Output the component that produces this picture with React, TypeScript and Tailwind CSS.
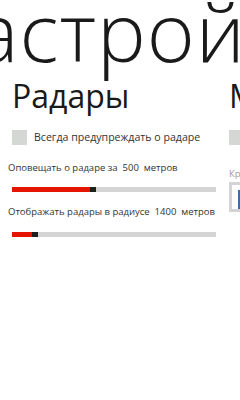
import { useState } from 'react'

const font = { fontFamily: '"Open Sans", "Noto Sans", sans-serif' }

function Slider({ value }: { value: number }) {
  // value is the red part width in px, thumb follows it
  return (
    <div className="flex h-[5px] w-[204px] bg-[#d4d4d4]">
      <div className="h-full bg-[#e51400]" style={{ width: value }} />
      <div className="h-full w-[6px] bg-[#1f1f1f]" />
    </div>
  )
}

export default function App() {
  const [warnAlways, setWarnAlways] = useState(false)

  return (
    <div className="h-[400px] w-[240px] overflow-hidden bg-white text-[#1a1a1a]" style={font}>
      {/* Panorama title */}
      <div className="ml-[-85px] mt-[-11px] h-[91px] whitespace-nowrap text-[82px] font-light leading-none tracking-[1px]">
        Настройки
      </div>

      <div className="flex">
        {/* Radars section */}
        <div className="w-[229px] shrink-0 pl-3">
          <h2 className="h-[32px] text-[32px] font-normal leading-none">Радары</h2>

          <label className="mt-[18px] flex h-[15px] items-center gap-[7px]" onClick={() => setWarnAlways(!warnAlways)}>
            <span className="h-[15px] w-[15px] shrink-0 bg-[#d5d7d4]" />
            <span className="whitespace-nowrap text-[10.6px] leading-[15px] text-[#333]">Всегда предупреждать о радаре</span>
          </label>

          <div className="ml-[-4px] mt-[17px] h-[12px] whitespace-nowrap text-[9.5px] leading-[12px] text-[#333]">
            Оповещать о радаре за&nbsp; 500 &nbsp;метров
          </div>
          <div className="mt-[13px]">
            <Slider value={78} />
          </div>

          <div className="ml-[-4px] mt-[14px] h-[12px] whitespace-nowrap text-[9.5px] leading-[12px] text-[#333]">
            Отображать радары в радиусе&nbsp; 1400 &nbsp;метров
          </div>
          <div className="mt-[14px]">
            <Slider value={20} />
          </div>
        </div>

        {/* Next section, peeking in */}
        <div className="w-[200px] shrink-0">
          <h2 className="h-[32px] whitespace-nowrap text-[32px] font-normal leading-none">Маршрут</h2>
          <div className="mt-[18px] h-[15px] w-[15px] bg-[#d5d7d4]" />
          <div className="mt-[23px] h-[12px] whitespace-nowrap text-[9.5px] leading-[12px] text-[#9a9a9a]">Крупные кнопки</div>
          <div className="mt-[2px] h-[30px] w-[60px] border-[3px] border-[#d4d4d4] bg-white pl-[6px] pt-[5px]">
            <div className="h-full w-full bg-[#3a6ea5]" />
          </div>
        </div>
      </div>
    </div>
  )
}
